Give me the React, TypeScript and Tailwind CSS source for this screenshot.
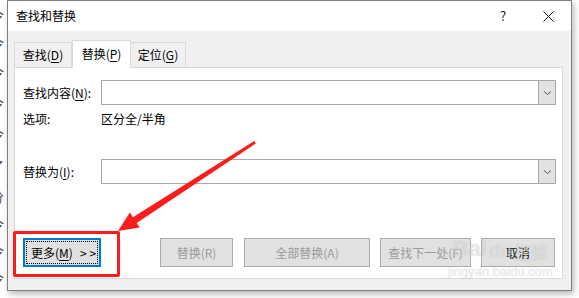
import React from "react";

const FONT = "font-['Microsoft_YaHei','Noto_Sans_CJK_SC',sans-serif]";

function Mn({ children }: { children: React.ReactNode }) {
    return <span className="underline underline-offset-[2px] decoration-[1px]">{children}</span>
}

function DocStrip() {
    const rows = [
        { h: 26, c: "令" }, { h: 29, c: "令" }, { h: 30, c: "令" }, { h: 31, c: "令" },
        { h: 32, c: "令" }, { h: 31, c: "了" }, { h: 29, c: "分" }, { h: 27, c: "令" },
        { h: 27, c: "令" }, { h: 27, c: "令" },
    ]
    return (
        <div className="w-[7px] h-full overflow-hidden bg-white flex flex-col pt-[2px]">
            {rows.map((r, i) => (
                <div key={i} className="flex items-center -ml-[10px] text-[14px] leading-none text-[#555]" style={{ height: r.h }}>
                    {r.c}
                </div>
            ))}
        </div>
    )
}

function Chevron() {
    return (
        <svg width="9" height="6" viewBox="0 0 9 6" fill="none">
            <path d="M1 1.5 L4.5 4.5 L8 1.5" stroke="#555" strokeWidth="1" />
        </svg>
    )
}

function Combo() {
    return (
        <div className="w-[455px] h-[25px] border border-[#a9a9a9] bg-white flex justify-end">
            <div className="w-[17px] h-full bg-[#e2e2e2] border-l border-[#a9a9a9] flex items-center justify-center">
                <Chevron />
            </div>
        </div>
    )
}

function Btn({ w, children, disabled = true }: { w: number, children: React.ReactNode, disabled?: boolean }) {
    return (
        <div
            className={`h-[29px] border border-[#adadad] bg-[#e1e1e1] flex items-center justify-center whitespace-nowrap text-[12px] ${disabled ? "text-[#9a9a9a]" : "text-black"}`}
            style={{ width: w }}
        >
            {children}
        </div>
    )
}

export default function App() {
    return (
        <div className={`w-[579px] h-[298px] bg-white flex relative overflow-hidden ${FONT}`}>
            <DocStrip />
            <div className="w-[565px] h-[291px] border border-[#7f7f7f] flex flex-col shadow-[2px_3px_6px_rgba(0,0,0,0.28)]">
                <div className="h-[30px] bg-white flex items-center pl-[8px] text-[12px] text-black">
                    <span className="flex-1">查找和替换</span>
                    <span className="w-[10px] text-[13px] mr-[33px] text-[#222]">?</span>
                    <svg width="11" height="11" viewBox="0 0 11 11" className="mr-[17px]">
                        <path d="M0.5 0.5 L10.5 10.5 M10.5 0.5 L0.5 10.5" stroke="#111" strokeWidth="1" />
                    </svg>
                </div>
                <div className="flex-1 bg-[#f0f0f0] px-[6px] pt-[9px] pb-[11px] flex flex-col">
                    <div className="flex items-end h-[27px] text-[12px] text-black">
                        <div className="w-[58px] h-[25px] border border-b-0 border-[#d9d9d9] bg-[#f0f0f0] flex items-center justify-center">
                            查找(<Mn>D</Mn>)
                        </div>
                        <div className="w-[59px] h-[28px] -mb-px relative z-10 border border-b-0 border-[#d9d9d9] bg-white flex items-center justify-center pb-[2px]">
                            替换(<Mn>P</Mn>)
                        </div>
                        <div className="w-[55px] h-[25px] border border-b-0 border-l-0 border-[#d9d9d9] bg-[#f0f0f0] flex items-center justify-center">
                            定位(<Mn>G</Mn>)
                        </div>
                    </div>
                    <div className="w-[549px] h-[212px] bg-white border border-[#d9d9d9] pl-[8px] pt-[12px] flex flex-col text-[12px] text-black">
                        <div className="flex items-center h-[25px]">
                            <span className="w-[78px]">查找内容(<Mn>N</Mn>):</span>
                            <Combo />
                        </div>
                        <div className="flex items-center h-[16px] mt-[6px]">
                            <span className="w-[78px]">选项:</span>
                            <span>区分全/半角</span>
                        </div>
                        <div className="flex items-center h-[25px] mt-[32px]">
                            <span className="w-[78px]">替换为(<Mn>I</Mn>):</span>
                            <Combo />
                        </div>
                        <div className="flex items-center mt-[54px]">
                            <div className="w-[78px] h-[29px] shrink-0 border-2 border-[#0078d7] bg-[#e1e1e1] p-[1px]">
                                <div className="w-full h-full border border-dotted border-black flex items-center pl-[4px] whitespace-nowrap">
                                    更多(<Mn>M</Mn>)<span className="ml-[7px] tracking-[3px]">&gt;&gt;</span>
                                </div>
                            </div>
                            <div className="ml-[59px]"><Btn w={73}>替换(R)</Btn></div>
                            <div className="ml-[11px]"><Btn w={126}>全部替换(A)</Btn></div>
                            <div className="ml-[10px]"><Btn w={91}>查找下一处(F)</Btn></div>
                            <div className="ml-[10px]"><Btn w={74} disabled={false}>取消</Btn></div>
                        </div>
                    </div>
                </div>
            </div>

            {/* annotation: red frame + arrow */}
            <div className="absolute left-[13px] top-[231px] w-[107px] h-[46px] border-[3px] border-[#fb1d1d] rounded-[2px]" />
            <svg className="absolute inset-0 pointer-events-none" width="579" height="298" viewBox="0 0 579 298">
                <polygon
                    points="254.2,141.0 132.9,217.2 129.9,212.5 118,231 139.7,227.6 136.7,223.0 255.8,143.5"
                    fill="#fb1d1d"
                />
            </svg>

            {/* watermark */}
            <div className="absolute left-[448px] top-[238px] flex flex-col items-center pointer-events-none">
                <div className="flex items-end leading-none font-['Liberation_Sans',sans-serif] font-bold text-[22px] text-white/45 [text-shadow:0_0_1px_rgba(0,0,0,0.18)]">
                    <span>Bai</span>
                    <span className="text-[19px] ml-[2px]">du</span>
                    <span className={`text-[17px] ml-[2px] ${FONT}`}>经验</span>
                </div>
                <div className="mt-[5px] text-[13px] leading-none font-['Liberation_Sans',sans-serif] text-white/45 [text-shadow:0_0_1px_rgba(0,0,0,0.18)]">
                    jingyan.baidu.com
                </div>
            </div>
        </div>
    )
}
